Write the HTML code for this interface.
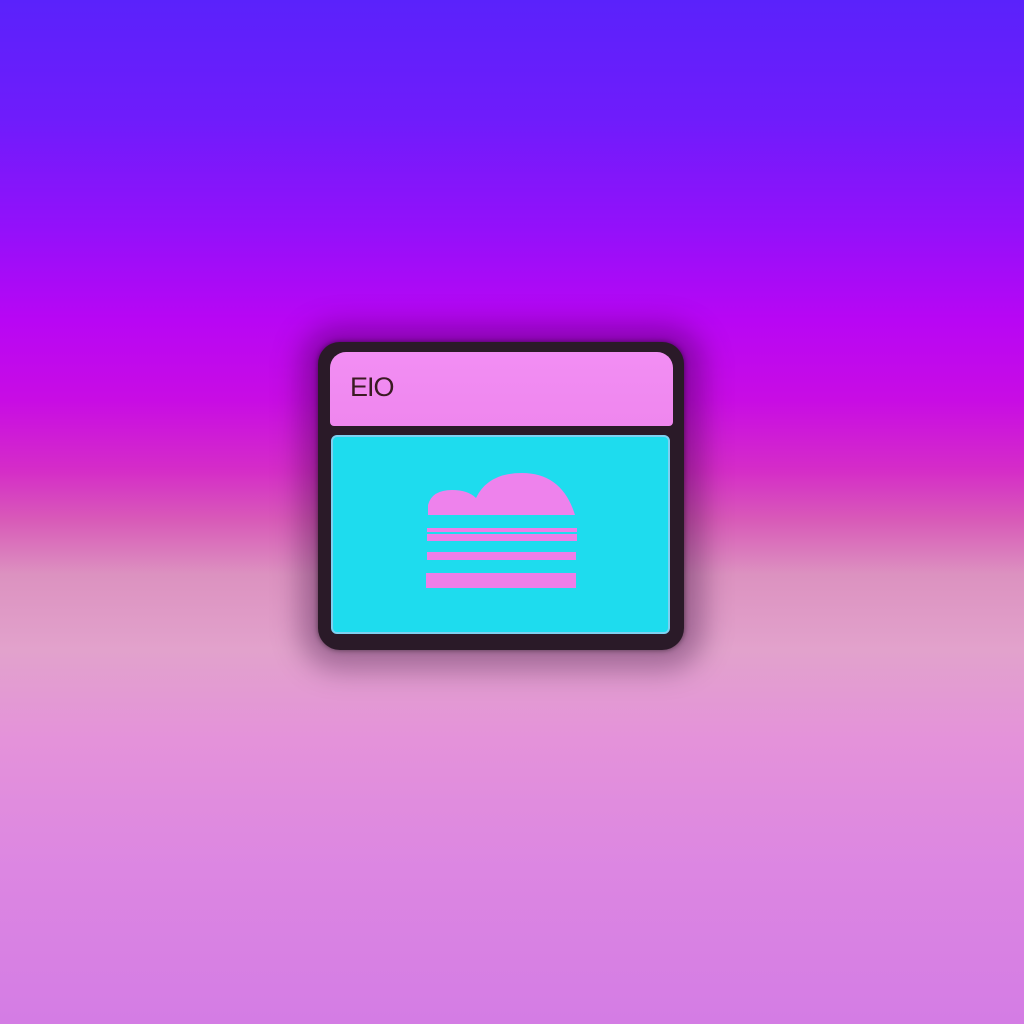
<!DOCTYPE html>
<html><head><style>
html,body{margin:0;padding:0;width:1024px;height:1024px;overflow:hidden}
body{position:relative;background:linear-gradient(180deg,#5a22fb 0px,#6f1cfb 120px,#9410fa 230px,#b806f4 320px,#c80ce4 400px,#d52cc8 470px,#d85ab8 520px,#dc92c0 575px,#e2a2cc 650px,#e492da 740px,#dc86e2 870px,#d47ce4 1024px)}
.glow{position:absolute;left:300px;top:325px;width:404px;height:345px;border-radius:40px;background:rgba(40,0,50,0.35);filter:blur(14px)}
.frame{position:absolute;left:318px;top:342px;width:366px;height:308px;border-radius:22px;background:#2a1a28;box-shadow:0 0 6px rgba(0,0,0,.5)}
.bar{position:absolute;left:330px;top:352px;width:343px;height:74px;border-radius:16px 16px 4px 4px;background:linear-gradient(180deg,#f28ef4,#ef86ee)}
.txt{position:absolute;left:350px;top:372px;font:27px "Liberation Sans",sans-serif;color:#3a1a22;letter-spacing:-1px}
.screen{position:absolute;left:331px;top:435px;width:339px;height:199px;border-radius:6px;background:#1edcee;border:2px solid #7fd0f0;box-sizing:border-box}
.s{position:absolute;background:#ee7ee8}
</style></head><body>
<div class="glow"></div>
<div class="frame"></div>
<div class="bar"></div>
<div class="txt">EIO</div>
<div class="screen"></div>
<svg style="position:absolute;left:0;top:0" width="1024" height="1024">
<path d="M428 515 L428 505 Q432 490 452 490 Q468 490 476 498 Q488 473 522 473 Q562 473 575 515 Z" fill="#ee82ec"/>
</svg>
<div class="s" style="left:427px;top:528px;width:150px;height:4px"></div>
<div class="s" style="left:427px;top:534px;width:150px;height:7px"></div>
<div class="s" style="left:427px;top:552px;width:149px;height:8px"></div>
<div class="s" style="left:426px;top:573px;width:150px;height:15px"></div>
</body></html>
